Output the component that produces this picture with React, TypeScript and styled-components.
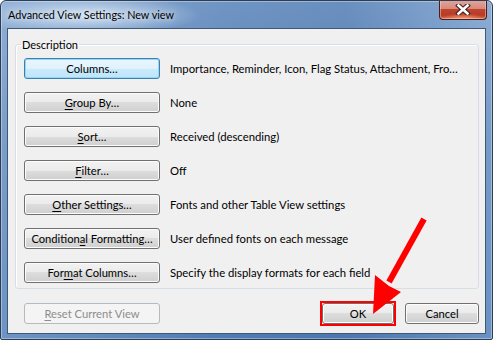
import React from "react";
import styled, { createGlobalStyle } from "styled-components";

const GlobalStyle = createGlobalStyle`
  html, body {
    margin: 0;
    padding: 0;
    background: #ffffff;
  }
  body {
    font-family: Lato, "Liberation Sans", sans-serif;
    font-size: 11.2px;
  }
`;

interface SettingRow {
  label: string;
  mnemonic?: number; //index of the underlined letter
  value: string;
  focused?: boolean;
}

const rows: SettingRow[] = [
  { label: "Columns...", value: "Importance, Reminder, Icon, Flag Status, Attachment, Fro...", focused: true },
  { label: "Group By...", mnemonic: 0, value: "None" },
  { label: "Sort...", mnemonic: 0, value: "Received (descending)" },
  { label: "Filter...", mnemonic: 0, value: "Off" },
  { label: "Other Settings...", mnemonic: 0, value: "Fonts and other Table View settings" },
  { label: "Conditional Formatting...", mnemonic: 9, value: "User defined fonts on each message" },
  { label: "Format Columns...", mnemonic: 3, value: "Specify the display formats for each field" },
];

const Label = ({ text, mnemonic }: { text: string; mnemonic?: number }) => {
  const t = text.replace("...", "…");
  if (mnemonic === undefined) return <>{t}</>;
  return (
    <>
      {t.slice(0, mnemonic)}
      <u>{t[mnemonic]}</u>
      {t.slice(mnemonic + 1)}
    </>
  );
};

export default function App() {
  return (
    <>
      <GlobalStyle />
      <StyledWindow>
        <StyledTitleBar>
          <StyledTitle>Advanced View Settings: New view</StyledTitle>
          <StyledClose aria-label="Close">
            <svg width="16" height="11" viewBox="0 0 16 11">
              <path
                d="M3.5 1.5 L12.5 9.5 M12.5 1.5 L3.5 9.5"
                stroke="#3b2020"
                strokeWidth="4.6"
                strokeLinecap="square"
              />
              <path
                d="M3.5 1.5 L12.5 9.5 M12.5 1.5 L3.5 9.5"
                stroke="#ffffff"
                strokeWidth="2.6"
                strokeLinecap="square"
              />
            </svg>
          </StyledClose>
        </StyledTitleBar>

        <StyledClient>
          <StyledGroup>
            <StyledLegend>Description</StyledLegend>
            <StyledRows>
              {rows.map((row) => (
                <StyledRow key={row.label}>
                  <StyledButton $variant={row.focused ? "focused" : "normal"} $width={136}>
                    <Label text={row.label} mnemonic={row.mnemonic} />
                  </StyledButton>
                  <StyledValue>{row.value.replace("...", "…")}</StyledValue>
                </StyledRow>
              ))}
            </StyledRows>
          </StyledGroup>

          <StyledFooter>
            <StyledButton $variant="disabled" $width={136}>
              <Label text="Reset Current View" mnemonic={0} />
            </StyledButton>
            <StyledSpacer />
            <StyledHighlight>
              <StyledButton $variant="normal" $width={72}>OK</StyledButton>
            </StyledHighlight>
            <StyledButton $variant="normal" $width={74}>Cancel</StyledButton>
          </StyledFooter>
        </StyledClient>

        {/* red annotation arrow pointing at OK */}
        <StyledArrow width="493" height="340" viewBox="0 0 493 340">
          <line x1="424" y1="219" x2="389" y2="282" stroke="#ff0000" strokeWidth="6" />
          <polygon points="375,275 389,286 401,292 373,314" fill="#ff0000" />
        </StyledArrow>
      </StyledWindow>
    </>
  );
}

const StyledWindow = styled.div`
  position: relative;
  box-sizing: border-box;
  width: 493px;
  height: 340px;
  display: flex;
  flex-direction: column;
  border: 1px solid #2c3d55;
  border-radius: 6px 6px 2px 2px;
  overflow: hidden;
  background:
    radial-gradient(ellipse 115px 20px at 85px 14px, rgba(214, 228, 243, 0.95), rgba(214, 228, 243, 0) 100%),
    linear-gradient(90deg, rgba(255, 255, 255, 0.12) 0%, rgba(40, 80, 140, 0.18) 45%, rgba(30, 70, 130, 0.22) 70%, rgba(255, 255, 255, 0.1) 100%),
    linear-gradient(180deg, #7fa4d0 0%, #6890c2 40%, #5985bc 100%);
  box-shadow: inset 0 0 0 1px rgba(255, 255, 255, 0.35);
`;

const StyledTitleBar = styled.div`
  height: 27px;
  display: flex;
  align-items: flex-start;
  justify-content: space-between;
  padding-left: 7px;
`;

const StyledTitle = styled.span`
  margin-top: 7px;
  font-size: 10.8px;
  color: #000000;
  text-shadow: 0 0 6px rgba(255, 255, 255, 0.9);
`;

const StyledClose = styled.button`
  box-sizing: border-box;
  width: 48px;
  height: 20px;
  margin: -1px 5px 0 0;
  padding: 0;
  display: flex;
  align-items: center;
  justify-content: center;
  border: 1px solid #4b1e1a;
  border-top: none;
  border-radius: 0 0 4px 4px;
  background:
    radial-gradient(ellipse 22px 6px at 50% 100%, rgba(255, 170, 120, 0.8), rgba(255, 170, 120, 0) 100%),
    linear-gradient(180deg, #e2a79d 0%, #d58a7c 45%, #c0432d 50%, #b83a25 80%, #d06a4c 100%);
  box-shadow: inset 0 0 0 1px rgba(255, 220, 210, 0.45);
`;

const StyledClient = styled.div`
  flex: 1;
  margin: 0 6px 5px 6px;
  border: 1px solid #3f5876;
  background: #f0f0f0;
  padding: 8px 6px 9px 7px;
  display: flex;
  flex-direction: column;
`;

const StyledGroup = styled.fieldset`
  margin: 0;
  padding: 6px 8px 5px 8px;
  border: 1px solid #d5dfe5;
  border-radius: 3px;
  box-shadow: inset 1px 1px 0 #ffffff;
`;

const StyledLegend = styled.legend`
  margin-left: -3px;
  padding: 0 1px;
  line-height: 15px;
  font-size: 11px;
  color: #000000;
`;

const StyledRows = styled.div`
  display: flex;
  flex-direction: column;
  gap: 13px;
`;

const StyledRow = styled.div`
  display: flex;
  align-items: center;
  gap: 10px;
`;

const StyledValue = styled.span`
  font-size: 11.3px;
  color: #000000;
  white-space: nowrap;
`;

const StyledFooter = styled.div`
  display: flex;
  align-items: center;
  margin-top: 14px;
  padding-left: 9px;
`;

const StyledSpacer = styled.div`
  flex: 1;
`;

const StyledHighlight = styled.div`
  display: flex;
  margin-right: 11px;
  outline: 2px solid #ff0000;
  outline-offset: 0;
`;

type ButtonVariant = "normal" | "focused" | "disabled";

const StyledButton = styled.button<{ $variant: ButtonVariant; $width: number }>`
  box-sizing: border-box;
  width: ${({ $width }) => $width}px;
  height: 21px;
  padding: 0;
  border-radius: 3px;
  font-family: Lato, "Liberation Sans", sans-serif;
  font-size: 11.2px;
  line-height: 19px;
  text-align: center;
  white-space: nowrap;
  color: ${({ $variant }) => ($variant === "disabled" ? "#8d8d8d" : "#000000")};
  border: 1px solid
    ${({ $variant }) =>
      $variant === "focused" ? "#3c7fb1" : $variant === "disabled" ? "#b7babc" : "#707070"};
  background: ${({ $variant }) =>
    $variant === "focused"
      ? "linear-gradient(180deg, #eaf6fd 0%, #dff2fc 50%, #cbeafb 50%, #bfe4f8 100%)"
      : $variant === "disabled"
      ? "#f4f4f4"
      : "linear-gradient(180deg, #f2f2f2 0%, #ebebeb 50%, #dddddd 50%, #cfcfcf 100%)"};
  box-shadow: ${({ $variant }) =>
    $variant === "focused"
      ? "inset 0 0 0 1px #93d9f5"
      : $variant === "disabled"
      ? "none"
      : "inset 0 0 0 1px #fcfcfc"};

  u {
    text-decoration-thickness: 1px;
    text-underline-offset: 2px;
  }
`;

const StyledArrow = styled.svg`
  position: absolute;
  left: -1px;
  top: -1px;
  pointer-events: none;
`;
